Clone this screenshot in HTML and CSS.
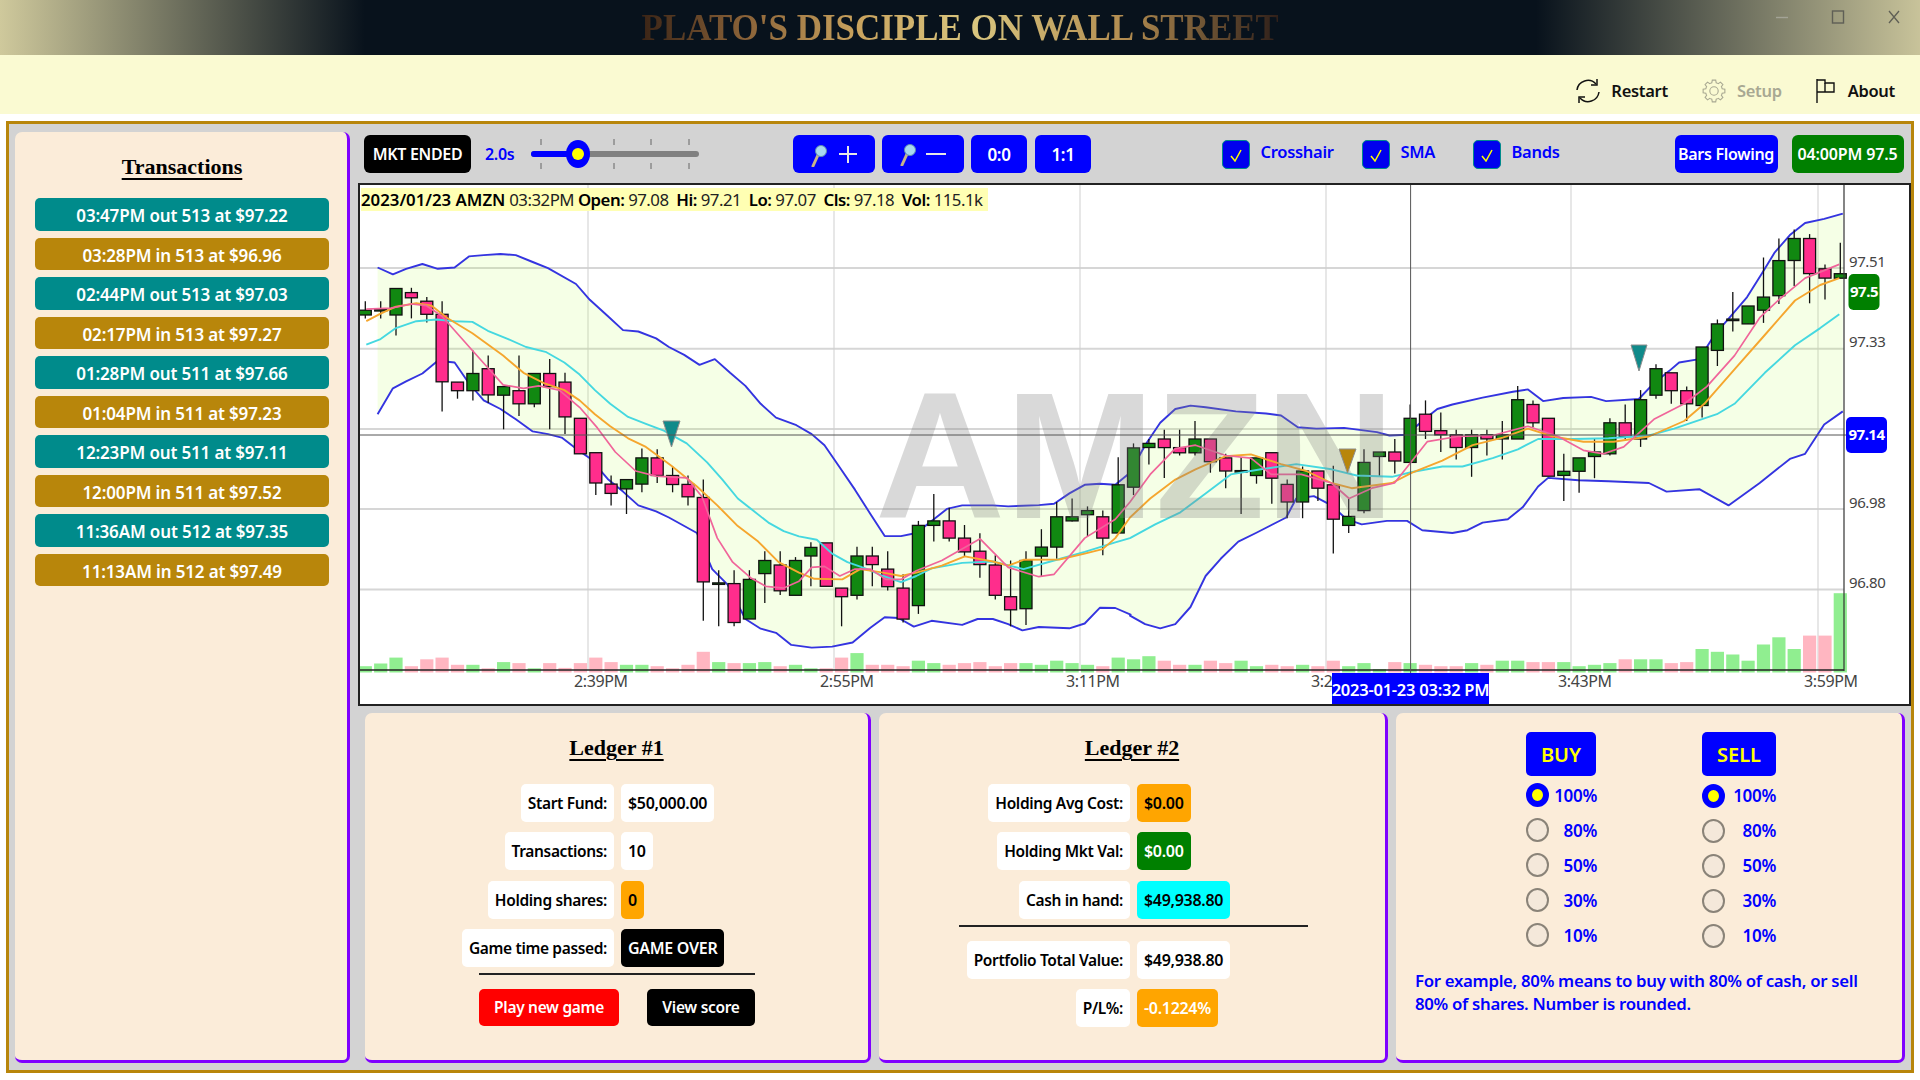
FILE: index.html
```html
<!DOCTYPE html>
<html lang="en">
<head>
<meta charset="utf-8">
<title>Plato's Disciple on Wall Street</title>
<link rel="stylesheet" href="styles.css">
</head>
<body>
<header class="titlebar">
  <h1 class="app-title">PLATO'S DISCIPLE ON WALL STREET</h1>
  <div class="window-controls">
    <svg width="14" height="14" viewBox="0 0 14 14"><path d="M1 7.5H13" stroke="#a3a396" stroke-width="1.4"/></svg>
    <svg width="14" height="14" viewBox="0 0 14 14"><rect x="1.5" y="1" width="11" height="12" fill="none" stroke="#5f5f56" stroke-width="1.4"/></svg>
    <svg width="14" height="14" viewBox="0 0 14 14"><path d="M2 1L12 13M12 1L2 13" stroke="#5f5f56" stroke-width="1.3"/></svg>
  </div>
</header>
<nav class="menubar">
  <button class="menu-item">
    <svg width="24" height="24" viewBox="0 0 24 24" fill="none" stroke="#111" stroke-width="1.5"><path d="M1 11A11 11 0 0 1 20 5"/><path d="M21 0V6H15"/><path d="M23 13A11 11 0 0 1 4 19"/><path d="M3 24V18H9"/></svg>
    <span>Restart</span>
  </button>
  <button class="menu-item is-disabled">
    <svg width="24" height="24" viewBox="-12 -12 24 24" fill="none" stroke="#a8a892" stroke-width="1.1">
      <defs><path id="tooth" d="M7.85 -3.25A8.5 8.5 0 0 1 8.21 -2.2L10.86 -1.72V1.72L8.21 2.2A8.5 8.5 0 0 1 7.85 3.25"/></defs>
      <circle r="4.2"/>
      <use href="#tooth"/><use href="#tooth" transform="rotate(45)"/><use href="#tooth" transform="rotate(90)"/><use href="#tooth" transform="rotate(135)"/><use href="#tooth" transform="rotate(180)"/><use href="#tooth" transform="rotate(225)"/><use href="#tooth" transform="rotate(270)"/><use href="#tooth" transform="rotate(315)"/>
    </svg>
    <span>Setup</span>
  </button>
  <button class="menu-item menu-about">
    <svg width="20" height="24" viewBox="0 0 20 24" fill="none" stroke="#111" stroke-width="1.4"><path d="M1 0V24"/><path d="M1 1H9V4H18V13H1"/><path d="M9 4V13"/></svg>
    <span>About</span>
  </button>
</nav>
<main class="workspace">
  <aside class="card transactions">
    <h2 class="card-title">Transactions</h2>
    <ul class="tx-list">
      <li class="tx tx-out">03:47PM out 513 at $97.22</li>
      <li class="tx tx-in">03:28PM in 513 at $96.96</li>
      <li class="tx tx-out">02:44PM out 513 at $97.03</li>
      <li class="tx tx-in">02:17PM in 513 at $97.27</li>
      <li class="tx tx-out">01:28PM out 511 at $97.66</li>
      <li class="tx tx-in">01:04PM in 511 at $97.23</li>
      <li class="tx tx-out">12:23PM out 511 at $97.11</li>
      <li class="tx tx-in">12:00PM in 511 at $97.52</li>
      <li class="tx tx-out">11:36AM out 512 at $97.35</li>
      <li class="tx tx-in">11:13AM in 512 at $97.49</li>
    </ul>
  </aside>
  <section class="right-col">
    <div class="toolbar">
      <span class="btn btn-black btn-mkt">MKT ENDED</span>
      <span class="speed">2.0s</span>
      <svg class="slider" width="168" height="38" viewBox="0 0 168 38">
        <g stroke="#666" stroke-width="1"><path d="M10 4V10M83 4V10M120 4V10M158 4V10M10 28V34M83 28V34M120 28V34M158 28V34"/></g>
        <rect x="0" y="16" width="168" height="6" rx="3" fill="#808080"/>
        <rect x="0" y="16" width="48" height="6" rx="3" fill="#0000ff"/>
        <ellipse cx="47" cy="19" rx="12" ry="14" fill="#0000ff"/>
        <circle cx="47" cy="19" r="6" fill="#ffff00"/>
      </svg>
      <button class="btn btn-blue btn-zoom-in" aria-label="Zoom in">
        <svg width="46" height="24" viewBox="0 0 46 24">
          <path d="M2 23L7 12" stroke="#c9b48a" stroke-width="3" stroke-linecap="round"/>
          <circle cx="10" cy="8" r="5.5" fill="#a8d8f0" stroke="#5f8fb0"/>
          <path d="M28 11H46M37 3V20" stroke="#e6e6e6" stroke-width="2"/>
        </svg>
      </button>
      <button class="btn btn-blue btn-zoom-out" aria-label="Zoom out">
        <svg width="46" height="24" viewBox="0 0 46 24">
          <path d="M2 23L7 12" stroke="#c9b48a" stroke-width="3" stroke-linecap="round"/>
          <circle cx="10" cy="8" r="5.5" fill="#a8d8f0" stroke="#5f8fb0"/>
          <path d="M26 12H46" stroke="#e6e6e6" stroke-width="2"/>
        </svg>
      </button>
      <button class="btn btn-blue btn-ratio">0:0</button>
      <button class="btn btn-blue btn-ratio">1:1</button>
      <label class="check check-first"><span class="check-box"><svg width="14" height="14" viewBox="0 0 14 14"><path d="M2 8L6 13L12 2" fill="none" stroke="#ffff00" stroke-width="1.5"/></svg></span><span class="check-label">Crosshair</span></label>
      <label class="check check-sma"><span class="check-box"><svg width="14" height="14" viewBox="0 0 14 14"><path d="M2 8L6 13L12 2" fill="none" stroke="#ffff00" stroke-width="1.5"/></svg></span><span class="check-label">SMA</span></label>
      <label class="check check-bands"><span class="check-box"><svg width="14" height="14" viewBox="0 0 14 14"><path d="M2 8L6 13L12 2" fill="none" stroke="#ffff00" stroke-width="1.5"/></svg></span><span class="check-label">Bands</span></label>
      <button class="btn btn-blue btn-flow">Bars Flowing</button>
      <span class="btn btn-green btn-time">04:00PM 97.5</span>
    </div>
    <div class="chart">
      <svg id="chart-svg" class="chart-svg" viewBox="360 185 1549 519" width="1549" height="519"></svg>
      <div class="legend"><b>2023/01/23 AMZN</b> 03:32PM <b>Open:</b> 97.08 &nbsp;<b>Hi:</b> 97.21 &nbsp;<b>Lo:</b> 97.07 &nbsp;<b>Cls:</b> 97.18 &nbsp;<b>Vol:</b> 115.1k</div>
    </div>
    <div class="bottom-row">
      <section class="card ledger ledger-one">
        <h2 class="card-title ledger-title">Ledger #1</h2>
        <div class="rows rows-one">
          <span class="cell">Start Fund:</span><span class="cell">$50,000.00</span>
          <span class="cell">Transactions:</span><span class="cell">10</span>
          <span class="cell">Holding shares:</span><span class="cell bg-orange">0</span>
          <span class="cell">Game time passed:</span><span class="cell bg-black">GAME OVER</span>
        </div>
        <hr class="rule rule-one">
        <div class="actions">
          <button class="action bg-red">Play new game</button>
          <button class="action bg-black">View score</button>
        </div>
      </section>
      <section class="card ledger ledger-two">
        <h2 class="card-title ledger-title">Ledger #2</h2>
        <div class="rows rows-two">
          <span class="cell">Holding Avg Cost:</span><span class="cell bg-orange">$0.00</span>
          <span class="cell">Holding Mkt Val:</span><span class="cell bg-green">$0.00</span>
          <span class="cell">Cash in hand:</span><span class="cell bg-cyan">$49,938.80</span>
        </div>
        <hr class="rule rule-two">
        <div class="rows rows-two">
          <span class="cell">Portfolio Total Value:</span><span class="cell">$49,938.80</span>
          <span class="cell">P/L%:</span><span class="cell bg-orange-light">-0.1224%</span>
        </div>
      </section>
      <section class="card trade">
        <div class="trade-cols">
          <div class="trade-col trade-buy">
            <button class="trade-btn trade-btn-buy">BUY</button>
            <div class="radio-row"><span class="radio is-on"></span><span class="radio-label">100%</span></div>
            <div class="radio-row"><span class="radio"></span><span class="radio-label">80%</span></div>
            <div class="radio-row"><span class="radio"></span><span class="radio-label">50%</span></div>
            <div class="radio-row"><span class="radio"></span><span class="radio-label">30%</span></div>
            <div class="radio-row"><span class="radio"></span><span class="radio-label">10%</span></div>
          </div>
          <div class="trade-col trade-sell">
            <button class="trade-btn trade-btn-sell">SELL</button>
            <div class="radio-row"><span class="radio is-on"></span><span class="radio-label">100%</span></div>
            <div class="radio-row"><span class="radio"></span><span class="radio-label">80%</span></div>
            <div class="radio-row"><span class="radio"></span><span class="radio-label">50%</span></div>
            <div class="radio-row"><span class="radio"></span><span class="radio-label">30%</span></div>
            <div class="radio-row"><span class="radio"></span><span class="radio-label">10%</span></div>
          </div>
        </div>
        <p class="trade-note">For example, 80% means to buy with 80% of cash, or sell 80% of shares. Number is rounded.</p>
      </section>
    </div>
  </section>
</main>
<script src="chart.js"></script>
</body>
</html>
```
FILE: styles.css
```css
* { box-sizing: border-box; }
html, body { margin: 0; padding: 0; }
body {
  width: 1920px;
  height: 1080px;
  overflow: hidden;
  background: #fff;
  font-family: "Noto Sans", "Open Sans", sans-serif;
  font-size: 15px;
  color: #000;
}
button { font-family: inherit; border: 0; padding: 0; margin: 0; }
ul { list-style: none; margin: 0; padding: 0; }
h1, h2, p { margin: 0; }

.titlebar {
  height: 55px;
  position: relative;
  display: flex;
  align-items: center;
  justify-content: center;
  background: linear-gradient(90deg, #cfc99c 0, #08121c 19%, #08121c 80%, #c8c39a 100%);
}
.app-title {
  font-family: "Liberation Serif", serif;
  font-weight: 700;
  font-size: 37px;
  line-height: 55px;
  white-space: nowrap;
  transform: scaleX(.945);
  background: linear-gradient(90deg, #3a2416 0, #8a6238 16%, #c9a35e 34%, #d9c67f 52%, #b28c50 76%, #30201a 100%);
  -webkit-background-clip: text;
  background-clip: text;
  color: transparent;
}
.window-controls {
  position: absolute;
  right: 19px;
  top: 10px;
  display: flex;
  gap: 42px;
}

.menubar {
  height: 59px;
  background: #fafad2;
  display: flex;
  align-items: center;
  justify-content: flex-end;
  padding: 12px 25px 0 0;
  gap: 34px;
}
.menu-item {
  background: none;
  display: flex;
  align-items: center;
  gap: 11px;
  font-size: 16.5px;
  font-weight: 600;
  color: #111;
  letter-spacing: -.3px;
}
.menu-item.is-disabled { color: #a8a892; }
.menu-about { gap: 12px; }

.workspace {
  margin: 7px 0 0 6px;
  width: 1908px;
  height: 952px;
  border: 3px solid #b8860b;
  background: #d3d3d3;
  padding: 8px 0 7px 6px;
  display: grid;
  grid-template-columns: 335px 1553px;
  column-gap: 8px;
}
.card {
  background: #fbecd9;
  border-right: 3px solid #7f00ff;
  border-bottom: 3px solid #7f00ff;
  border-radius: 7px;
}
.card-title {
  font-family: "Liberation Serif", serif;
  font-weight: 700;
  font-size: 22px;
  text-align: center;
  text-decoration: underline;
  text-decoration-thickness: 2px;
  text-underline-offset: 4px;
}
.transactions { padding: 20px 18px 0 20px; }
.transactions .card-title { height: 46px; line-height: 30px; }
.tx-list { display: flex; flex-direction: column; gap: 7px; }
.tx {
  height: 32.5px;
  border-radius: 5px;
  color: #fff;
  font-size: 17px;
  font-weight: 600;
  line-height: 35px;
  text-align: center;
  letter-spacing: -.15px;
}
.tx-out { background: #008b8b; }
.tx-in { background: #b8860b; }

.right-col {
  display: grid;
  grid-template-rows: 51px 523px 357px;
  row-gap: 0;
  min-width: 0;
}
.toolbar {
  display: flex;
  align-items: flex-start;
  padding: 3px 0 0 6px;
}
.btn {
  height: 38px;
  border-radius: 6px;
  color: #fff;
  font-size: 16px;
  font-weight: 600;
  display: flex;
  align-items: center;
  justify-content: center;
  white-space: nowrap;
  letter-spacing: -.3px;
}
.btn-black { background: #000; }
.btn-blue { background: #0000ff; }
.btn-green { background: #008000; }
.btn-mkt { width: 107px; }
.speed { margin: 0 0 0 14px; width: 46px; line-height: 38px; color: #0000ff; font-size: 16px; font-weight: 600; letter-spacing: -.3px; }
.slider { display: block; margin-right: 94px; }
.btn-zoom-in, .btn-zoom-out { width: 82px; margin-right: 7px; }
.btn-ratio { width: 56px; margin-right: 8px; font-size: 17px; }
.btn-zoom-in svg { margin-top: 2px; }
.check { display: flex; align-items: flex-start; height: 38px; }
.check-first { margin-left: 122.5px; width: 140px; }
.check-sma { width: 111px; }
.check-bands { width: 202px; }
.check-box {
  margin-top: 5px;
  width: 28px;
  height: 29px;
  background: #0000ee;
  border: 1px solid #008b8b;
  border-radius: 5px;
  display: flex;
  align-items: center;
  justify-content: center;
}
.check-label { margin: 5px 0 0 11px; color: #0000ff; font-size: 16.5px; font-weight: 600; letter-spacing: -.3px; }
.btn-flow { width: 103px; margin-right: 14px; }
.btn-time { width: 112px; letter-spacing: -.15px; }

.chart {
  position: relative;
  width: 1553px;
  height: 523px;
  border: 2px solid #222;
  background: #fff;
  overflow: hidden;
}
.chart-svg { display: block; }
.chart-svg text { font-family: "Noto Sans", sans-serif; }
.chart-svg .watermark { font-family: "Liberation Sans", sans-serif; }
.legend {
  position: absolute;
  left: 1px;
  top: 3px;
  width: 627px;
  height: 23px;
  background: #ffffb3;
  font-size: 16.8px;
  line-height: 23px;
  white-space: nowrap;
  letter-spacing: -.5px;
  color: #222;
}
.legend b { font-weight: 600; color: #000; }
.legend b:first-child { letter-spacing: 0; }

.bottom-row {
  display: grid;
  grid-template-columns: 506px 509px 509px;
  column-gap: 8px;
  margin: 7px 0 0 7px;
  height: 350px;
}
.ledger-title { height: 71px; line-height: 70px; }
.rows { display: grid; row-gap: 10.3px; justify-items: start; }
.rows-one { grid-template-columns: 249px auto; column-gap: 7px; }
.rows-two { grid-template-columns: 251px auto; column-gap: 7px; }
.rows > :nth-child(odd) { justify-self: end; }
.cell {
  height: 38px;
  line-height: 38px;
  padding: 0 7px;
  background: #fff;
  border-radius: 5px;
  font-size: 16px;
  font-weight: 600;
  letter-spacing: -.3px;
  white-space: nowrap;
}
.rows > .cell:nth-child(odd) { font-size: 15.5px; letter-spacing: -.35px; }
.bg-orange { background: #ffa500; }
.bg-orange-light { background: #ffa500; color: #fff; }
.bg-black { background: #000; color: #fff; }
.bg-green { background: #008000; color: #fff; }
.bg-cyan { background: #00ffff; }
.bg-red { background: #ff0000; color: #fff; }
.rule { border: 0; height: 2px; background: #222; margin: 0; }
.rule-one { width: 276px; margin: 6px 0 14px 114px; }
.rule-two { width: 349px; margin: 6px 0 14px 80px; }
.actions { display: flex; justify-content: space-between; width: 276px; margin-left: 114px; }
.action {
  height: 37px;
  border-radius: 5px;
  font-size: 15.5px;
  font-weight: 600;
  letter-spacing: -.3px;
}
.action.bg-red { width: 140px; }
.action.bg-black { width: 108px; }

.trade { padding: 19px 0 0 19px; }
.trade-cols { display: flex; margin-left: 111px; }
.trade-col { display: flex; flex-direction: column; }
.trade-buy { width: 176px; }
.trade-sell { width: 74px; padding-top: 0; }
.trade-btn {
  height: 44px;
  border-radius: 5px;
  background: #0000ff;
  color: #ffff00;
  font-size: 20px;
  font-weight: 600;
  margin-bottom: 7px;
  flex: none;
}
.trade-btn-buy { width: 70px; }
.trade-btn-sell { width: 74px; margin-bottom: 7.5px; }
.radio-row {
  display: flex;
  align-items: center;
  justify-content: space-between;
  height: 24px;
  margin-bottom: 11px;
  width: 71px;
}
.trade-sell .radio-row { width: 74px; }
.radio {
  width: 23px;
  height: 24px;
  border-radius: 50%;
  border: 2px solid #8a8378;
  background: #f4e8da;
  flex: none;
}
.radio.is-on {
  border: 6px solid #0000ff;
  background: #ffff00;
}
.radio-label {
  color: #0000ff;
  font-size: 17px;
  font-weight: 600;
  letter-spacing: -.3px;
}
.trade-note {
  margin-top: 10px;
  width: 452px;
  color: #0000ff;
  font-size: 16.8px;
  font-weight: 600;
  line-height: 23.5px;
  letter-spacing: -.3px;
}
```
FILE: chart.js
```js
// One row per minute bar: [body top, body bottom, wick top, wick bottom, up?]
// Values are vertical positions on the price scale, in scale units.
var G = 1, P = 0;
var bars = [
 [378,392,352,402,G],[376,380,352,402,G],[315,392,315,452,G],[327,342,313,402,P],[352,390,340,414,P],
 [390,586,352,672,P],[587,612,587,635,P],[562,612,495,640,G],[548,624,510,648,P],[600,625,600,724,G],
 [612,650,510,685,P],[562,650,562,660,G],[562,600,520,724,P],[587,688,560,738,P],[692,795,692,795,P],
 [792,880,792,915,P],[883,910,858,945,P],[870,897,870,970,G],[807,883,780,907,G],[807,858,782,880,P],
 [858,884,832,907,P],[884,920,858,945,P],[922,1167,870,1280,P],[1170,1172,1133,1296,G],[1172,1285,1133,1296,P],
 [1160,1275,1133,1275,G],[1105,1143,1078,1228,G],[1118,1193,1078,1205,P],[1105,1206,1095,1206,G],[1067,1092,1052,1180,G],
 [1054,1180,1054,1180,P],[1185,1210,1185,1296,P],[1092,1206,1065,1218,G],[1092,1117,1065,1180,P],[1130,1181,1078,1192,P],
 [1185,1275,1145,1285,P],[1003,1236,990,1260,G],[990,1003,912,1050,G],[990,1040,952,1050,P],[1040,1080,1002,1092,P],
 [1078,1117,1026,1155,P],[1118,1206,1090,1218,P],[1210,1248,1105,1296,P],[1105,1245,1078,1292,G],[1066,1092,1014,1150,G],
 [978,1066,935,1100,G],[978,990,925,992,G],[960,972,948,1035,G],[978,1040,960,1090,P],[885,1025,805,1025,G],
 [778,892,765,915,G],[765,777,752,826,G],[752,777,725,865,P],[777,792,725,800,P],[752,792,700,800,G],
 [752,818,752,850,P],[807,845,795,895,P],[844,846,805,970,G],[807,858,807,882,G],[792,866,792,940,P],
 [884,935,870,982,P],[845,935,832,982,G],[845,895,845,932,P],[885,985,830,1085,P],[977,1003,925,1025,G],
 [820,960,782,968,G],[790,803,790,860,G],[790,816,752,852,P],[692,820,652,826,G],[680,730,640,752,P],
 [728,740,675,790,P],[740,777,725,812,P],[740,777,725,862,G],[740,752,725,800,P],[740,752,700,812,G],
 [638,752,598,752,G],[652,705,640,718,P],[692,860,692,860,P],[846,858,795,932,G],[807,846,807,908,G],
 [790,803,752,866,G],[705,795,692,800,G],[705,745,652,752,P],[638,752,610,775,G],[548,625,535,635,G],
 [560,612,560,650,P],[612,650,600,700,P],[485,655,485,690,G],[418,495,405,540,G],[404,406,325,440,G],
 [366,418,366,418,G],[340,378,225,415,G],[234,336,170,360,G],[170,234,144,308,G],[170,272,157,358,P],
 [258,285,245,347,P],[272,285,182,285,G]
];
var volumeTops = [1412,1404,1387,1412,1392,1387,1408,1408,1418,1400,1403,1418,1403,1417,1403,1387,1400,1408,1408,1412,1418,1408,1370,1400,1403,1403,1400,1412,1408,1418,1418,1387,1374,1408,1408,1412,1396,1403,1408,1403,1400,1412,1403,1403,1408,1396,1403,1408,1412,1387,1392,1383,1396,1408,1408,1396,1403,1396,1412,1408,1412,1408,1412,1396,1412,1403,1420,1400,1403,1408,1412,1412,1403,1408,1396,1396,1400,1400,1400,1412,1408,1403,1392,1392,1392,1403,1400,1362,1370,1378,1396,1349,1328,1362,1323,1323,1200];

// Each line: left section then right section, as pairs of [x, y] in scale units.
var upperA = [[54,254],[84,274],[110,258],[142,244],[172,258],[205,254],[233,222],[262,218],[295,215],[325,218],[358,238],[388,256],[443,302],[470,348],[505,395],[535,436],[565,440],[600,460],[625,485],[655,508],[685,537],[715,520],[745,560],[775,598],[805,650],[835,690],[875,712],[905,738],[930,770],[960,835],[990,900],[1020,970],[1048,1034],[1080,1034],[1110,1025],[1140,990],[1170,955],[1200,945],[1260,945],[1290,948],[1350,944],[1380,940],[1410,910],[1440,885],[1470,882],[1500,885]];
var upperB = [[0,850],[30,770],[60,705],[90,665],[120,655],[150,660],[210,672],[270,678],[300,684],[333,718],[370,722],[425,720],[490,732],[515,742],[550,740],[580,700],[610,665],[640,652],[700,632],[760,615],[790,608],[820,642],[860,633],[915,630],[945,642],[1010,636],[1040,590],[1070,555],[1090,530],[1130,520],[1160,450],[1190,400],[1225,340],[1255,270],[1280,210],[1310,160],[1340,125],[1378,113],[1415,98]];
var lowerA = [[54,680],[84,605],[110,585],[142,562],[172,525],[205,530],[233,590],[262,640],[295,665],[325,695],[358,730],[388,738],[415,748],[443,780],[470,808],[505,868],[535,905],[565,945],[600,962],[625,980],[680,1025],[710,1130],[740,1175],[775,1275],[805,1303],[835,1315],[865,1350],[905,1358],[945,1355],[985,1343],[1020,1300],[1048,1270],[1075,1272],[1105,1297],[1140,1280],[1200,1292],[1230,1275],[1260,1275],[1290,1290],[1318,1308],[1350,1298],[1410,1302],[1440,1288],[1470,1242],[1500,1243],[1530,1262]];
var lowerB = [[0,1265],[30,1290],[60,1302],[90,1290],[120,1240],[150,1150],[180,1100],[215,1050],[250,1025],[310,980],[330,925],[365,918],[400,945],[430,985],[460,1000],[510,990],[550,990],[580,1017],[640,1025],[670,1017],[700,995],[750,985],[780,950],[810,890],[830,865],[890,872],[950,875],[1030,880],[1065,905],[1130,898],[1188,945],[1250,880],[1310,810],[1340,795],[1378,710],[1415,672]];
var cyanA = [[32,478],[60,462],[90,430],[130,410],[170,405],[205,410],[240,412],[270,438],[310,462],[345,485],[385,500],[420,530],[450,565],[480,610],[510,650],[545,688],[580,708],[615,728],[660,765],[700,820],[730,870],[760,925],[790,960],[820,995],[850,1020],[880,1035],[915,1045],[945,1085],[975,1110],[1010,1128],[1045,1150],[1080,1168],[1110,1150],[1140,1128],[1200,1112],[1260,1108],[1320,1130],[1380,1105],[1440,1080],[1500,1052]];
var cyanB = [[0,1040],[50,1000],[100,965],[150,910],[200,855],[260,840],[330,825],[400,840],[450,858],[520,862],[560,848],[620,832],[660,832],[720,808],[770,782],[810,752],[880,752],[950,750],[1030,742],[1080,722],[1165,680],[1200,650],[1260,560],[1320,480],[1370,430],[1408,390]];
var orangeA = [[32,410],[60,388],[90,368],[130,358],[160,365],[190,400],[240,445],[300,510],[340,560],[380,590],[420,610],[450,640],[480,680],[510,715],[545,750],[580,775],[630,830],[680,890],[720,945],[760,1005],[800,1050],[840,1110],[880,1140],[910,1158],[965,1160],[1000,1130],[1045,1140],[1080,1150],[1110,1140],[1160,1120],[1205,1093],[1260,1108],[1290,1120],[1320,1103],[1390,1102],[1440,1085],[1475,1072],[1500,1040]];
var orangeB = [[0,980],[40,925],[90,870],[130,840],[190,802],[240,797],[300,825],[350,845],[400,880],[440,895],[520,880],[560,850],[620,815],[680,770],[740,748],[790,722],[840,745],[900,760],[960,760],[1030,745],[1100,700],[1140,650],[1200,550],[1260,450],[1320,350],[1370,305],[1408,285]];
var pinkA = [[32,375],[80,372],[120,360],[150,365],[180,395],[240,495],[270,545],[300,595],[340,605],[370,598],[410,610],[450,660],[485,720],[520,790],[560,845],[600,860],[660,865],[690,920],[720,1040],[750,1110],[785,1155],[815,1180],[850,1185],[880,1165],[905,1125],[930,1122],[960,1150],[990,1130],[1020,1130],[1050,1160],[1080,1160],[1110,1135],[1160,1105],[1235,1042],[1290,1125],[1350,1152],[1380,1145],[1440,1040],[1500,985]];
var pinkB = [[0,935],[40,855],[90,780],[130,770],[190,800],[240,808],[280,855],[340,855],[400,880],[435,925],[480,895],[525,880],[590,760],[650,745],[720,742],[790,715],[850,745],[900,785],[940,795],[980,775],[1040,695],[1100,650],[1145,600],[1200,510],[1250,400],[1290,345],[1340,285],[1408,245]];

function yOf(v) { return 180 + v / 2.904; }
function xA(v) { return 350 + v / 1.96; }
function xB(v) { return 1130 + v / 1.985; }
function barX(i) { return 365.3 + 15.365 * i; }
function f(n) { return n.toFixed(1); }
function toPoints(a, b) {
  return a.map(function (p) { return [xA(p[0]), yOf(p[1])]; })
    .concat(b.map(function (p) { return [xB(p[0]), yOf(p[1])]; }));
}
function pointAttr(pts) { return pts.map(function (p) { return f(p[0]) + ',' + f(p[1]); }).join(' '); }
function polyline(pts, color, w) {
  return '<polyline points="' + pointAttr(pts) + '" fill="none" stroke="' + color + '" stroke-width="' + w + '" stroke-linejoin="round"/>';
}
function marker(x, y, w, h, color) {
  return '<polygon points="' + x + ',' + y + ' ' + (x + w) + ',' + y + ' ' + (x + w / 2) + ',' + (y + h) + '" fill="' + color + '" stroke="#8c8c8c" stroke-width="1"/>';
}
function tag(x, y, w, h, color, label, size) {
  return '<rect x="' + x + '" y="' + y + '" width="' + w + '" height="' + h + '" rx="5" fill="' + color + '"/>' +
    '<text x="' + (x + w / 2) + '" y="' + (y + h / 2 + size * 0.36) + '" text-anchor="middle" fill="#fff" font-weight="700" font-size="' + size + '" letter-spacing="-.5">' + label + '</text>';
}

var html = '';
[268, 348.7, 429, 509, 589.6].forEach(function (y) {
  html += '<line x1="360" x2="1844" y1="' + y + '" y2="' + y + '" stroke="#d6d6d6" stroke-width="2"/>';
});
[588, 834, 1080, 1326, 1571, 1818].forEach(function (x) {
  html += '<line x1="' + x + '" x2="' + x + '" y1="185" y2="670" stroke="#cfcfcf" stroke-width="1"/>';
});
var upper = toPoints(upperA, upperB), lower = toPoints(lowerA, lowerB);
html += '<polygon points="' + pointAttr(upper.concat(lower.slice().reverse())) + '" fill="#adff2f" fill-opacity=".12"/>';
bars.forEach(function (b, i) {
  var top = yOf(volumeTops[i]);
  html += '<rect x="' + f(barX(i) - 6.6) + '" y="' + f(top) + '" width="13.2" height="' + f(672.5 - top) + '" fill="' + (b[4] ? '#90ee90' : '#ffb6c1') + '"/>';
});
html += '<line x1="360" x2="1844" y1="670" y2="670" stroke="#222" stroke-width="1.6"/>';
html += polyline(upper, '#3434e0', 1.9) + polyline(lower, '#3434e0', 1.9);
bars.forEach(function (b, i) {
  var x = barX(i);
  html += '<line x1="' + f(x) + '" x2="' + f(x) + '" y1="' + f(yOf(b[2])) + '" y2="' + f(yOf(b[3])) + '" stroke="#111" stroke-width="1.3"/>';
  html += '<rect x="' + f(x - 6) + '" y="' + f(yOf(b[0])) + '" width="12" height="' + f(Math.max(1.5, (b[1] - b[0]) / 2.904)) + '" fill="' + (b[4] ? '#118811' : '#ff2d8c') + '" stroke="#111" stroke-width="1.3"/>';
});
html += polyline(toPoints(cyanA, cyanB), '#45d8e0', 1.9);
html += polyline(toPoints(orangeA, orangeB), '#f5a62e', 1.9);
html += polyline(toPoints(pinkA, pinkB), '#f0659a', 1.7);
html += '<text class="watermark" x="875" y="518" font-weight="700" font-size="180" fill="#808080" fill-opacity=".3">AMZN</text>';
html += marker(663, 421, 17, 26, '#108a8a') + marker(1339, 449, 17, 24, '#b8860b') + marker(1631, 345, 16, 26, '#108a8a');
html += '<line x1="360" x2="1846" y1="435" y2="435" stroke="#555" stroke-width="1"/>';
html += '<line x1="1410.6" x2="1410.6" y1="185" y2="673" stroke="#555" stroke-width="1"/>';
html += '<line x1="1844" x2="1844" y1="185" y2="671" stroke="#333" stroke-width="1.2"/>';
[[262, '97.51'], [342, '97.33'], [503, '96.98'], [583, '96.80']].forEach(function (t) {
  html += '<text x="1849" y="' + (t[0] + 5) + '" fill="#444" font-size="15" letter-spacing="-.4">' + t[1] + '</text>';
});
[[574, '2:39PM'], [820, '2:55PM'], [1066, '3:11PM'], [1311, '3:27PM'], [1558, '3:43PM'], [1804, '3:59PM']].forEach(function (t) {
  html += '<text x="' + t[0] + '" y="687" fill="#444" font-size="16" letter-spacing="-.4">' + t[1] + '</text>';
});
html += tag(1848.5, 274, 31, 36, '#008000', '97.5', 15);
html += tag(1846, 417, 41, 36, '#0000ff', '97.14', 15);
html += '<rect x="1332" y="673" width="157" height="32" fill="#0000ff"/>' +
  '<text x="1410.5" y="696" text-anchor="middle" fill="#fff" font-size="16.5" font-weight="600" letter-spacing="-.25">2023-01-23 03:32 PM</text>';
document.getElementById('chart-svg').innerHTML = html;
```
